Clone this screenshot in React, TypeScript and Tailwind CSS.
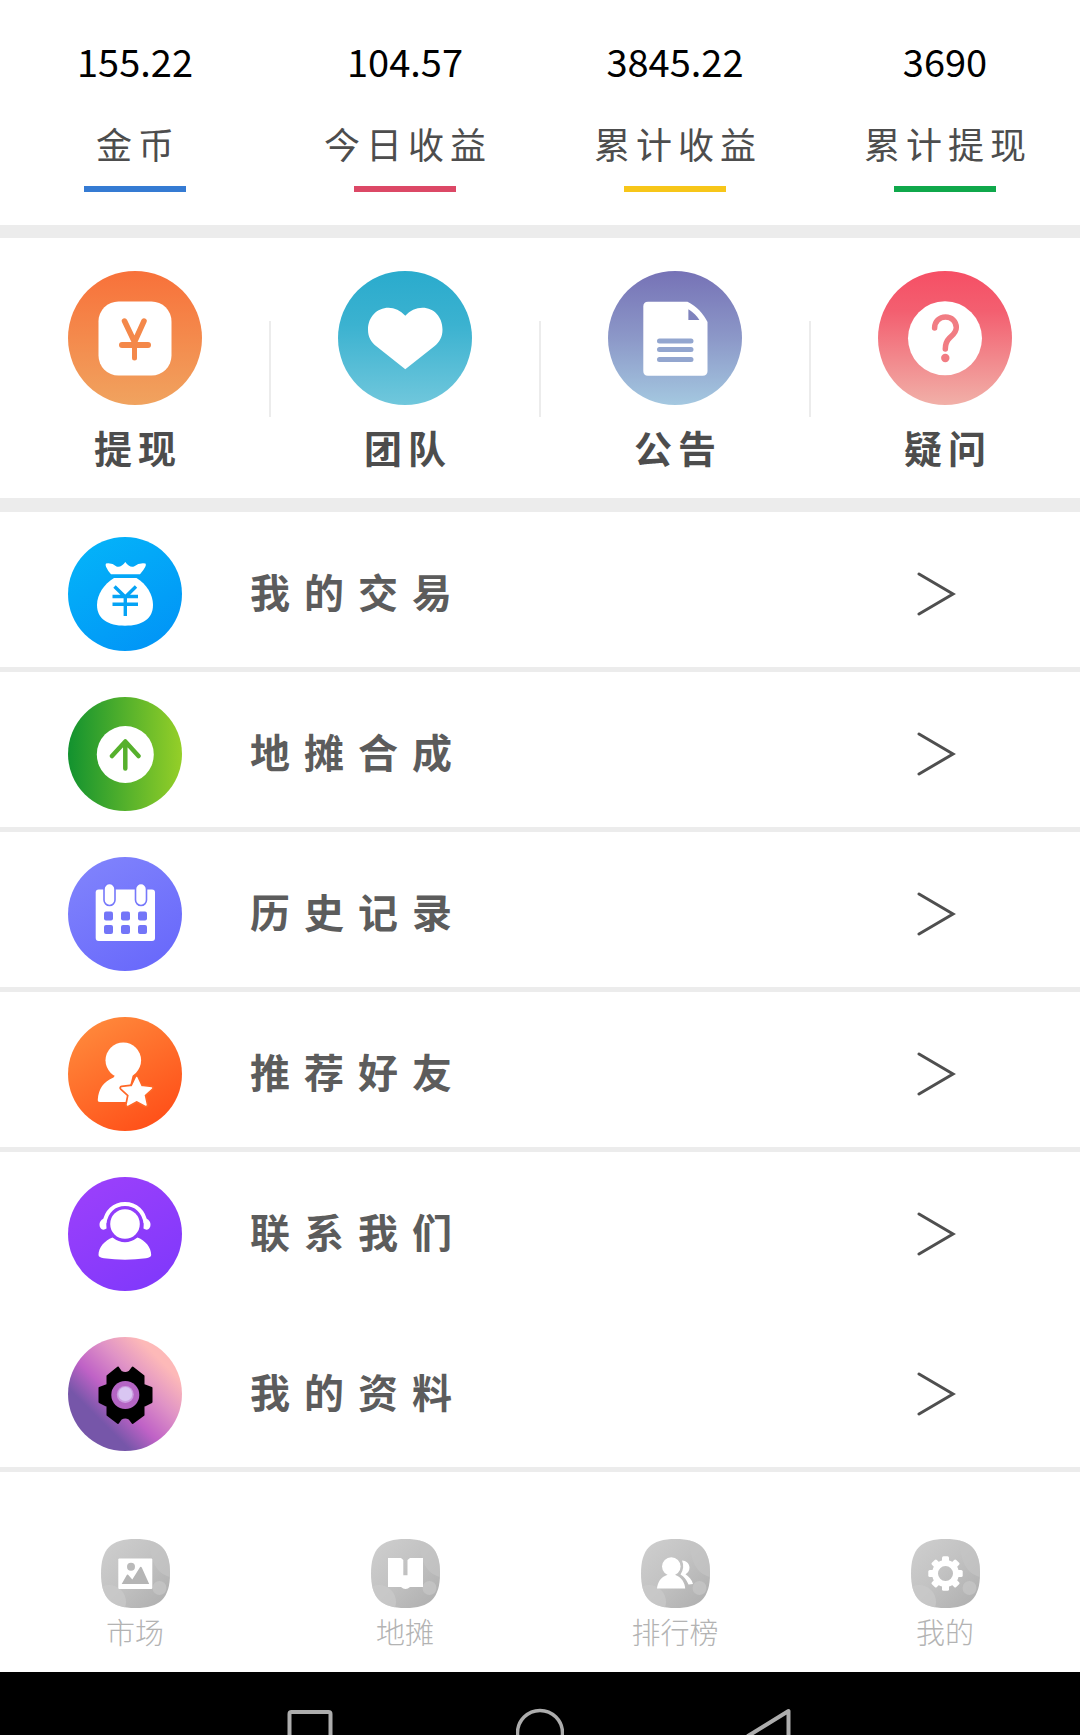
import * as React from "react";

interface Stat {
  value: string;
  label: string;
  barClass: string;
}

interface IconLink {
  label: string;
  icon: React.ReactNode;
}

interface MenuItem extends IconLink {
  divided?: boolean;
}

const stats: Stat[] = [
  { value: "155.22", label: "金币", barClass: "bg-[#357bd3]" },
  { value: "104.57", label: "今日收益", barClass: "bg-[#dc4866]" },
  { value: "3845.22", label: "累计收益", barClass: "bg-[#f7c619]" },
  { value: "3690", label: "累计提现", barClass: "bg-[#0fa84b]" },
];

interface DiscProps {
  id: string;
  size: number;
  stops: [string, string][];
  // gradient vector: x1 y1 x2 y2
  vector: [number, number, number, number];
  className: string;
  children: React.ReactNode;
}

function Disc({ id, size, stops, vector, className, children }: DiscProps) {
  const [x1, y1, x2, y2] = vector;
  return (
    <svg viewBox={`0 0 ${size} ${size}`} className={className} aria-hidden="true">
      <defs>
        <linearGradient id={id} x1={x1} y1={y1} x2={x2} y2={y2}>
          {stops.map(([offset, color]) => (
            <stop key={offset} offset={offset} stopColor={color} />
          ))}
        </linearGradient>
      </defs>
      <circle cx={size / 2} cy={size / 2} r={size / 2} fill={`url(#${id})`} />
      {children}
    </svg>
  );
}

const shortcutIcon = "size-[134px]";
const menuIcon = "size-[114px] shrink-0";

const shortcuts: IconLink[] = [
  {
    label: "提现",
    icon: (
      <Disc id="cash" size={134} vector={[0, 0, 0, 1]} stops={[["0", "#f8713a"], ["1", "#f0a35f"]]} className={shortcutIcon}>
        <rect x="30.5" y="30.5" width="73" height="74" rx="20" fill="#fff" />
        <g fill="none" stroke="#f4884a" strokeWidth="5.5" strokeLinecap="round" strokeLinejoin="round">
          <path d="M56.5 50 66.5 71 76 50" />
          <path d="M66.5 71V87" strokeWidth="5" />
          <path d="M54 74H80" strokeWidth="6" />
        </g>
      </Disc>
    ),
  },
  {
    label: "团队",
    icon: (
      <Disc id="team" size={134} vector={[0, 0, 0, 1]} stops={[["0", "#2aabcd"], ["0.4", "#3bb2d0"], ["1", "#70c7dc"]]} className={shortcutIcon}>
        <path
          fill="#fff"
          d="M67.3 44.7C62.5 39.5 56.5 36.7 50.5 36.7C39 36.7 30 46 30 58.5C30 66 33 71 38 75L67.3 98.3L96.7 75C101.5 71 104.5 66 104.5 58.5C104.5 46 96 36.7 84.5 36.7C78 36.7 72 39.5 67.3 44.7Z"
        />
      </Disc>
    ),
  },
  {
    label: "公告",
    icon: (
      <Disc id="notice" size={134} vector={[0, 0, 0, 1]} stops={[["0", "#7672b6"], ["0.5", "#8c98c8"], ["1", "#a4c8e0"]]} className={shortcutIcon}>
        <path
          fill="#fff"
          d="M40 30.7H79.5C88 35 95.5 42.5 99.5 51V100Q99.5 104.7 94.5 104.7H40Q35.3 104.7 35.3 100V35.5Q35.3 30.7 40 30.7Z"
        />
        <path fill="#7f83bd" d="M80.4 38.3V49H91.4C88.5 44.5 85 41 80.4 38.3Z" />
        <path d="M51.5 70H83M51.5 78.4H83M51.5 88.4H83" stroke="#93a6cf" strokeWidth="5" strokeLinecap="round" />
      </Disc>
    ),
  },
  {
    label: "疑问",
    icon: (
      <Disc id="help" size={134} vector={[0, 0, 0, 1]} stops={[["0", "#f64f65"], ["0.3", "#f35f70"], ["1", "#f1b0a8"]]} className={shortcutIcon}>
        <circle cx="67" cy="67.3" r="37" fill="#fff" />
        <path
          d="M56.6 57C56.6 50.5 61.5 46 67.5 46C73.7 46 78.3 50.5 78.3 56.5C78.3 61.5 75 63.5 71.5 67C68.5 70 67.3 73 67.3 78"
          fill="none"
          stroke="#f17c83"
          strokeWidth="5.5"
          strokeLinecap="round"
        />
        <circle cx="67.3" cy="87" r="4.2" fill="#f17c83" />
      </Disc>
    ),
  },
];

const star = "M68.7 60.5 73 69.8 83.5 71 75.8 78 78 88 68.7 83 59.5 88 61.5 78 53.8 71 64.3 69.8Z";

const menu: MenuItem[] = [
  {
    label: "我的交易",
    divided: true,
    icon: (
      <Disc id="trade" size={114} vector={[0.2, 0, 0.8, 1]} stops={[["0", "#04b3f9"], ["1", "#0194f6"]]} className={menuIcon}>
        <path
          fill="#fff"
          d="M38 26.5Q44 25.500 48.5 29.5Q53 31 57.3 25Q61.5 31 66 29.5Q71 25.5 77.5 26.5Q79.5 28.5 72 37.3H43Q36 29 38 26.5Z"
        />
        <path
          fill="#fff"
          d="M46 41H68.5C78.5 47 85 57.5 85 68C85 82 74 88.7 57 88.7C40 88.7 29 82 29 68C29 57.5 36 47 46 41Z"
        />
        <path
          d="M46.5 49.5 57.3 60 68 49.5M44.5 59.5H70M44.5 67.3H70M57.3 60V79"
          fill="none"
          stroke="#05a3f5"
          strokeWidth="3.4"
        />
      </Disc>
    ),
  },
  {
    label: "地摊合成",
    divided: true,
    icon: (
      <Disc id="merge" size={114} vector={[0, 0, 1, 0]} stops={[["0", "#12922f"], ["1", "#95cf28"]]} className={menuIcon}>
        <circle cx="57.3" cy="57.5" r="28.5" fill="#fff" />
        <path
          d="M44 59 57.3 44.5 70.5 59M57.3 45.500V71.5"
          fill="none"
          stroke="#56b02c"
          strokeWidth="4.5"
          strokeLinecap="round"
          strokeLinejoin="round"
        />
      </Disc>
    ),
  },
  {
    label: "历史记录",
    divided: true,
    icon: (
      <Disc id="history" size={114} vector={[0.2, 0, 0.8, 1]} stops={[["0", "#8083fc"], ["1", "#6868fb"]]} className={menuIcon}>
        <rect x="27.7" y="32.5" width="59.3" height="51.5" rx="3" fill="#fff" />
        <g fill="#fff" stroke="#7678fb" strokeWidth="1.6">
          <rect x="36" y="26.5" width="11" height="22" rx="5.5" />
          <rect x="67.5" y="26.5" width="11" height="22" rx="5.5" />
        </g>
        <g fill="#7375f8">
          {[36, 53, 70].map((x) => (
            <React.Fragment key={x}>
              <rect x={x} y="54.5" width="9" height="9" rx="2" />
              <rect x={x} y="68" width="9" height="9" rx="2" />
            </React.Fragment>
          ))}
        </g>
      </Disc>
    ),
  },
  {
    label: "推荐好友",
    divided: true,
    icon: (
      <Disc id="invite" size={114} vector={[0.2, 0, 0.8, 1]} stops={[["0", "#ff8a3c"], ["1", "#ff4d17"]]} className={menuIcon}>
        <circle cx="55.3" cy="43.3" r="17.8" fill="#fff" />
        <path fill="#fff" d="M48 57H65L58 85H32Q29.5 85 29.8 82.5C30.5 72 35.5 64.5 45.5 60.5Z" />
        <path d={star} fill="#ff6828" stroke="#ff6828" strokeWidth="5" strokeLinejoin="round" />
        <path d={star} fill="#fff" stroke="#fff" strokeWidth="1.5" strokeLinejoin="round" />
      </Disc>
    ),
  },
  {
    label: "联系我们",
    icon: (
      <Disc id="contact" size={114} vector={[0.2, 0, 0.8, 1]} stops={[["0", "#9b40fb"], ["1", "#8038fb"]]} className={menuIcon}>
        <circle cx="57" cy="47" r="14.8" fill="#fff" />
        <path d="M36.5 46C38 34.5 46 27 57 27C68 27 76 34.5 77.5 46" fill="none" stroke="#fff" strokeWidth="4" />
        <path d="M38 40.5C33.5 42 30.5 45 31.8 49.5C33 53 36 53.5 38.5 51.5Z" fill="#fff" />
        <path d="M76 40.5C80.500 42 83.500 45 82.200 49.500C81 53 78 53.500 75.500 51.500Z" fill="#fff" />
        <path
          fill="#fff"
          d="M44.5 60.5Q57 70 69.5 60.5C77.5 63.5 83.2 70.5 83.2 78Q83 80.5 78 81.3Q57 84 36 81.3Q30.5 80.5 30.5 78C30.5 70.5 36.5 63.5 44.5 60.5Z"
        />
      </Disc>
    ),
  },
  {
    label: "我的资料",
    divided: true,
    icon: (
      <Disc
        id="profile"
        size={114}
        vector={[0.1, 0.9, 0.9, 0.1]}
        stops={[["0.22", "#7656a9"], ["0.42", "#bf62c6"], ["0.65", "#df92c6"], ["0.88", "#fdb9b8"]]}
        className={menuIcon}
      >
        <path
          d="M50 30.5 53.2 35Q57.3 37 61.2 35L64.6 30.5 75.5 39V48L83.5 51V65L75.5 69V78L64.6 86 61.2 81.500Q57.3 79.500 53.2 81.500L50 86 39.5 78V69L31.5 65V51L39.5 48V39Z"
          fill="#000"
          stroke="#000"
          strokeWidth="2"
          strokeLinejoin="round"
        />
        <circle cx="57.3" cy="58" r="14" fill="#b465c4" />
        <circle cx="57.3" cy="57.5" r="8.500" fill="#cb9de0" />
        <circle cx="57.3" cy="57" r="7" fill="#d9c6f2" />
      </Disc>
    ),
  },
];

function TabTile({ id, children }: { id: string; children: React.ReactNode }) {
  const shape = "M34.5 0C59 0 69 10 69 34.5C69 59 59 69 34.5 69C10 69 0 59 0 34.5C0 10 10 0 34.5 0Z";
  return (
    <svg viewBox="0 0 69 69" className="size-[69px]" aria-hidden="true">
      <defs>
        <linearGradient id={`${id}-bg`} x1="0" y1="0" x2="1" y2="1">
          <stop offset="0" stopColor="#cfcfcf" />
          <stop offset="0.45" stopColor="#c3c3c3" />
          <stop offset="1" stopColor="#adadad" />
        </linearGradient>
        <clipPath id={`${id}-clip`}>
          <path d={shape} />
        </clipPath>
      </defs>
      <g clipPath={`url(#${id}-clip)`}>
        <rect width="69" height="69" fill={`url(#${id}-bg)`} />
        <path d="M48 0C49 20 54 34 69 38V0Z" fill="#c4c4c4" opacity="0.7" />
        <circle cx="8" cy="63" r="17" fill="#cacaca" opacity="0.7" />
        <circle cx="58.5" cy="49" r="7" fill="#c8c8c8" opacity="0.7" />
      </g>
      {children}
    </svg>
  );
}

const tabs: IconLink[] = [
  {
    label: "市场",
    icon: (
      <TabTile id="market">
        <rect x="17.3" y="19.5" width="34" height="30.5" rx="1" fill="#fff" />
        <circle cx="30" cy="27.7" r="4" fill="#bababa" />
        <path d="M20.7 45 25.5 36.5Q26.500 34.500 27.800 36.500L31.3 40.5 38.5 29Q39.800 26.500 41 29L48.2 45Z" fill="#b5b5b5" />
      </TabTile>
    ),
  },
  {
    label: "地摊",
    icon: (
      <TabTile id="stall">
        <path d="M17 19H30L32.3 21V36.3H36.5V21L39 19H52V48H39Q37 50 34.5 50Q32 50 30 48H17Z" fill="#fff" />
      </TabTile>
    ),
  },
  {
    label: "排行榜",
    icon: (
      <TabTile id="ranking">
        <circle cx="30.3" cy="27.5" r="9.3" fill="#fff" />
        <path d="M16 49.5C16.5 43 20 38 26 36H34.5C40 38 43.8 43 44.2 49.5Z" fill="#fff" />
        <path
          d="M41 21.5C45 21.5 48.5 24.5 48.5 28.5C48.5 31.5 47 34 44.5 35.3C48 37.5 51 41 52 45L47.5 45.5C45.5 41 43 37.5 39.5 35.5C42.5 31 43 26 41 21.5Z"
          fill="#fff"
        />
      </TabTile>
    ),
  },
  {
    label: "我的",
    icon: (
      <TabTile id="mine">
        <circle cx="34.5" cy="34.5" r="10.5" fill="none" stroke="#fff" strokeWidth="6" />
        {[0, 45, 90, 135, 180, 225, 270, 315].map((angle) => (
          <rect key={angle} x="31" y="17.3" width="7" height="7" rx="1.5" fill="#fff" transform={`rotate(${angle} 34.5 34.5)`} />
        ))}
      </TabTile>
    ),
  },
];

function StatBar() {
  return (
    <section className="grid grid-cols-4 border-b-[13px] border-[#ececec] pt-[41px] pb-[33px]">
      {stats.map((stat) => (
        <div key={stat.label} className="flex flex-col items-center">
          <span className="text-[38px] leading-10 text-black">{stat.value}</span>
          <span className="mt-[42px] pl-1.5 text-[36px] leading-10 tracking-[6px] text-[#4d4d4d]">{stat.label}</span>
          <span className={`mt-[23px] h-1.5 w-[102px] ${stat.barClass}`} />
        </div>
      ))}
    </section>
  );
}

function Shortcuts() {
  return (
    <section className="flex border-b-[14px] border-[#ececec] pt-[33px] pb-[31px]">
      {shortcuts.map((item, index) => (
        <React.Fragment key={item.label}>
          {index > 0 && <span className="-mx-px h-24 w-0.5 self-center bg-[#ececec]" />}
          <a href="#" className="flex flex-1 flex-col items-center">
            {item.icon}
            <span className="mt-[22px] pl-1.5 text-[38px] leading-10 font-bold tracking-[6px] text-[#4d4d4d]">{item.label}</span>
          </a>
        </React.Fragment>
      ))}
    </section>
  );
}

function Menu() {
  return (
    <ul>
      {menu.map((item) => (
        <li key={item.label}>
          <a
            href="#"
            className={`flex items-center border-b-[5px] pt-[25px] pr-[124px] pb-4 pl-[68px] ${
              item.divided ? "border-[#ececec]" : "border-transparent"
            }`}
          >
            {item.icon}
            <span className="ml-[68px] flex-1 pb-1.5 text-[40px] leading-[48px] font-bold tracking-[14px] text-[#5c5c5c]">
              {item.label}
            </span>
            <svg viewBox="0 0 40 44" className="h-11 w-10 shrink-0" aria-hidden="true">
              <path d="M3 2 37 22 3 42" fill="none" stroke="#4f4f4f" strokeWidth="3" strokeLinecap="round" />
            </svg>
          </a>
        </li>
      ))}
    </ul>
  );
}

function TabBar() {
  return (
    <nav className="grid grid-cols-4 pt-[67px] pb-[21px]">
      {tabs.map((tab) => (
        <a key={tab.label} href="#" className="flex flex-col items-center">
          {tab.icon}
          <span className="mt-[3px] text-[29px] leading-10 font-light text-[#b3b3b3]">{tab.label}</span>
        </a>
      ))}
    </nav>
  );
}

function SystemBar() {
  const keyIcon = "h-[27px] w-12";
  return (
    <div className="flex justify-center gap-[182px] bg-black pt-9">
      <button aria-label="多任务">
        <svg viewBox="0 0 48 27" className={keyIcon}>
          <rect x="3.5" y="4" width="41" height="41" rx="2" fill="none" stroke="#adadad" strokeWidth="4" />
        </svg>
      </button>
      <button aria-label="主页">
        <svg viewBox="0 0 48 27" className={keyIcon}>
          <circle cx="24" cy="25" r="22.5" fill="none" stroke="#adadad" strokeWidth="3.5" />
        </svg>
      </button>
      <button aria-label="返回">
        <svg viewBox="0 0 48 27" className={keyIcon}>
          <path d="M42.5 3V55L2 28Z" fill="none" stroke="#adadad" strokeWidth="4" strokeLinejoin="round" />
        </svg>
      </button>
    </div>
  );
}

export default function App() {
  return (
    <div className="min-h-screen bg-white font-['Noto_Sans_CJK_SC',sans-serif]">
      <StatBar />
      <Shortcuts />
      <Menu />
      <TabBar />
      <SystemBar />
    </div>
  );
}
